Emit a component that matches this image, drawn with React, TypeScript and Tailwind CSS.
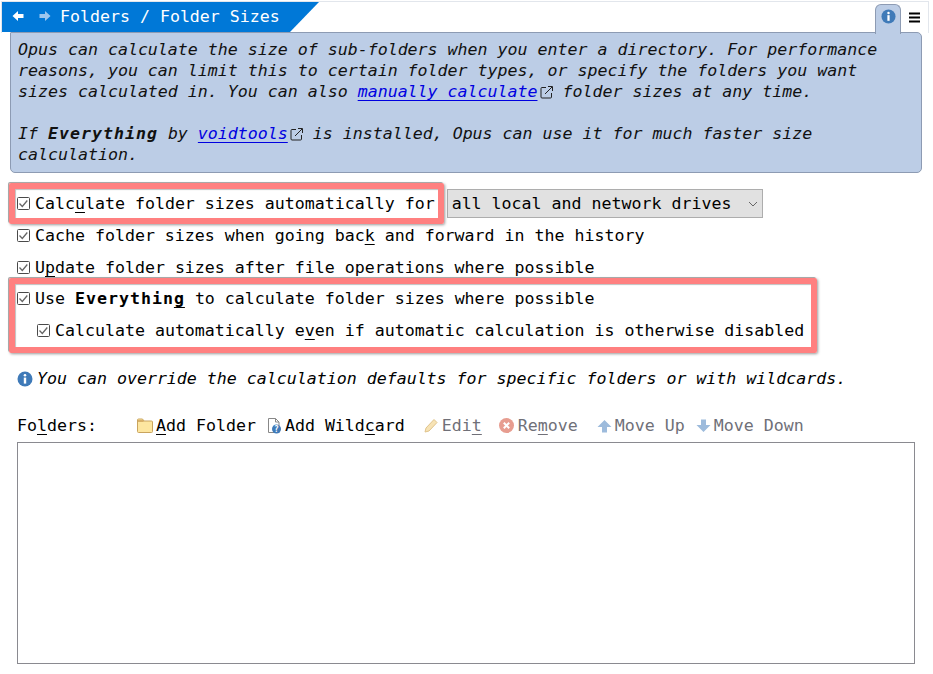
import React from "react";

const InfoIcon = ({ size = 16 }: { size?: number }) => (
  <svg width={size} height={size} viewBox="0 0 16 16" className="shrink-0">
    <circle cx="8" cy="8" r="7.5" fill="#3f7ab8" />
    <circle cx="8" cy="4.2" r="1.3" fill="#fff" />
    <rect x="6.8" y="6.6" width="2.4" height="6" fill="#fff" />
  </svg>
);

const ExtLink = () => (
  <svg width="13" height="13" viewBox="0 0 13 13" className="inline-block ml-[2px] mb-[1px] align-middle" fill="none" stroke="#222" strokeWidth="1">
    <path d="M6 1.500H2a1 1 0 0 0-1 1V11a1 1 0 0 0 1 1h8.500a1 1 0 0 0 1-1V7" />
    <path d="M5 8l7-7M8 .5h4.500V5" />
  </svg>
);

const Check = () => (
  <svg width="13" height="13" viewBox="0 0 13 13" className="shrink-0">
    <rect x="0.5" y="0.5" width="12" height="12" rx="1" fill="#fff" stroke="#4a4a4a" />
    <path d="M2.500 6.500l2.800 3 5-6" fill="none" stroke="#666" strokeWidth="1.300" />
  </svg>
);

const U = ({ children }: { children: React.ReactNode }) => (
  <span className="underline underline-offset-[3px] decoration-1">{children}</span>
);

const CheckRow = ({ children, className = "" }: { children: React.ReactNode; className?: string }) => (
  <div className={`flex items-center gap-[5px] h-[21px] ${className}`}>
    <Check />
    <span>{children}</span>
  </div>
);

const ToolBtn = ({ icon, children, off, className = "" }: { icon: React.ReactNode; children: React.ReactNode; off?: boolean; className?: string }) => (
  <div className={`flex items-center gap-[3px] ${off ? "text-[#707078]" : ""} ${className}`}>
    {icon}
    <span>{children}</span>
  </div>
);

export default function App() {
  return (
    <div className="relative w-[933px] h-[674px] bg-white overflow-hidden text-[16.6px] leading-[21px] text-black [font-family:'DejaVu_Sans_Mono',monospace]">
      {/* title + tabs */}
      <div className="flex justify-between h-[32px] mt-[1px] ml-[1px] mr-[4px] pr-[1px] border border-b-0 border-[#e2e6ec]">
        <div className="flex items-center w-[317px] h-[30px] pb-[2px] bg-[#0078d7] text-white [clip-path:polygon(0_0,100%_0,288px_100%,0_100%)]">
          <svg width="12" height="12" viewBox="0 0 12 12" className="ml-[10px]">
            <path d="M0.500 6L6 1v3h5.500v4H6v3z" fill="#fff" />
          </svg>
          <svg width="12" height="12" viewBox="0 0 12 12" className="ml-[15px]">
            <path d="M11.500 6L6 1v3H0.500v4H6v3z" fill="#9cc6ee" />
          </svg>
          <span className="ml-[9px]">Folders / Folder Sizes</span>
        </div>
        <div className="flex items-start">
          <div className="relative z-10 flex items-start justify-center pt-[4px] w-[26px] h-[30px] mt-[2px] bg-[#bccde6] border border-b-0 border-[#8d9bb3] rounded-t-[6px]">
            <InfoIcon size={15} />
          </div>
          <div className="flex items-center justify-center w-[26px] h-[26px] mt-[2px]">
            <svg width="11" height="11" viewBox="0 0 11 11">
              <rect y="0.500" width="11" height="2" fill="#000" />
              <rect y="4.500" width="11" height="2" fill="#000" />
              <rect y="8.500" width="11" height="2" fill="#000" />
            </svg>
          </div>
        </div>
      </div>

      {/* intro panel */}
      <div className="ml-[10px] mr-[11px] -mt-[1px] h-[141px] bg-[#bccde6] border border-[#8d9bb3] rounded-b-[5px] rounded-tr-[5px] rounded-tl-[1px] px-[7px] pt-[6px] italic text-[#111] whitespace-pre">
        <div>Opus can calculate the size of sub-folders when you enter a directory. For performance</div>
        <div>reasons, you can limit this to certain folder types, or specify the folders you want</div>
        <div>
          sizes calculated in. You can also <a className="text-[#0000e0] underline underline-offset-[3px] decoration-1">manually calculate</a>
          <ExtLink /> folder sizes at any time.
        </div>
        <div className="h-[21px]" />
        <div>
          If <b className="tracking-[1px]">Everything</b> by <a className="text-[#0000e0] underline underline-offset-[3px] decoration-1">voidtools</a>
          <ExtLink /> is installed, Opus can use it for much faster size
        </div>
        <div>calculation.</div>
      </div>

      {/* options */}
      <div className="ml-[17px] mt-[16px]">
        <div className="flex items-center h-[29px]">
          <CheckRow>
            Calc<U>u</U>late folder sizes automatically for
          </CheckRow>
          <div className="flex items-center justify-between w-[316px] h-[29px] ml-[12px] pl-[4px] pr-[3px] bg-[#e1e1e1] border border-[#adadad]">
            <span>all local and network drives</span>
            <svg width="10" height="6" viewBox="0 0 10 6" className="mr-[1px]" fill="none" stroke="#666" strokeWidth="1">
              <path d="M1 1l4 4 4-4" />
            </svg>
          </div>
        </div>
        <CheckRow className="mt-[7px]">
          Cache folder sizes when going bac<U>k</U> and forward in the history
        </CheckRow>
        <CheckRow className="mt-[11px]">
          U<U>p</U>date folder sizes after file operations where possible
        </CheckRow>
        <CheckRow className="mt-[10px]">
          Use <b className="tracking-[1px]">Everythin<U>g</U></b> to calculate folder sizes where possible
        </CheckRow>
        <CheckRow className="mt-[11px] ml-[20px]">
          Calculate automatically e<U>v</U>en if automatic calculation is otherwise disabled
        </CheckRow>
        <div className="flex items-center gap-[4px] mt-[27px] h-[21px] italic">
          <InfoIcon size={16} />
          <span>You can override the calculation defaults for specific folders or with wildcards.</span>
        </div>

        {/* folder toolbar */}
        <div className="flex items-center h-[21px] mt-[26px]">
          <span className="w-[120px]">
            Fo<U>l</U>ders:
          </span>
          <ToolBtn
            icon={
              <svg width="16" height="16" viewBox="0 0 16 16">
                <path d="M0.500 3V2a1 1 0 0 1 1-1h4l1.500 2h7.500a1 1 0 0 1 1 1v9.500a1 1 0 0 1-1 1h-13a1 1 0 0 1-1-1z" fill="#fde6a0" stroke="#c9a45e" />
                <path d="M1 2h5l1 2H1z" fill="#d8b068" />
              </svg>
            }
          >
            <U>A</U>dd Folder
          </ToolBtn>
          <ToolBtn
            className="ml-[11px]"
            icon={
              <svg width="15" height="16" viewBox="0 0 15 16">
                <path d="M1.500 0.500h7l3.500 3.500v10.500h-10.500z" fill="#fff" stroke="#888" />
                <path d="M8.500 0.500v3.500h3.500" fill="none" stroke="#888" />
                <circle cx="9.500" cy="11" r="4.500" fill="#3f7ab8" />
                <text x="9.500" y="14" fontSize="8" fontWeight="700" textAnchor="middle" fill="#fff">?</text>
              </svg>
            }
          >
            Add Wild<U>c</U>ard
          </ToolBtn>
          <ToolBtn
            off
            className="ml-[19px]"
            icon={
              <svg width="15" height="15" viewBox="0 0 15 15">
                <path d="M1 14l1-4 8-8.500 3 3-8 8.500z" fill="#f7e3b5" stroke="#e0c48c" />
              </svg>
            }
          >
            Edi<U>t</U>
          </ToolBtn>
          <ToolBtn
            off
            className="ml-[17px]"
            icon={
              <svg width="15" height="15" viewBox="0 0 15 15" className="mr-[1px]">
                <circle cx="7.500" cy="7.500" r="7.500" fill="#e79d90" />
                <path d="M4.800 4.800l5.400 5.400M10.200 4.800l-5.400 5.400" stroke="#fff" strokeWidth="2" />
              </svg>
            }
          >
            Re<U>m</U>ove
          </ToolBtn>
          <ToolBtn
            off
            className="ml-[19px]"
            icon={
              <svg width="15" height="14" viewBox="0 0 15 14">
                <path d="M7.500 1L14.500 8H10v5.500H5V8H0.500z" fill="#9dbbdc" />
              </svg>
            }
          >
            Move Up
          </ToolBtn>
          <ToolBtn
            off
            className="ml-[11px]"
            icon={
              <svg width="15" height="14" viewBox="0 0 15 14">
                <path d="M7.500 13L14.500 6H10V0.500H5V6H0.500z" fill="#9dbbdc" />
              </svg>
            }
          >
            Move Down
          </ToolBtn>
        </div>

        <div className="w-[898px] h-[222px] mt-[6px] bg-white border border-[#8a8a90]" />
      </div>

      {/* highlight boxes on top */}
      <div className="absolute left-[9px] top-[183px] w-[435px] h-[41px] border-[6px] border-[#ff8080] rounded-[2px] shadow-[-1px_-1px_0_#a8a8a8,1px_1px_3px_rgba(0,0,0,0.4),inset_1px_1px_1px_rgba(0,0,0,0.25)]" />
      <div className="absolute left-[9px] top-[278px] w-[808px] h-[75px] border-[6px] border-[#ff8080] rounded-[2px] shadow-[-1px_-1px_0_#a8a8a8,1px_1px_3px_rgba(0,0,0,0.4),inset_1px_1px_1px_rgba(0,0,0,0.25)]" />
    </div>
  );
}
